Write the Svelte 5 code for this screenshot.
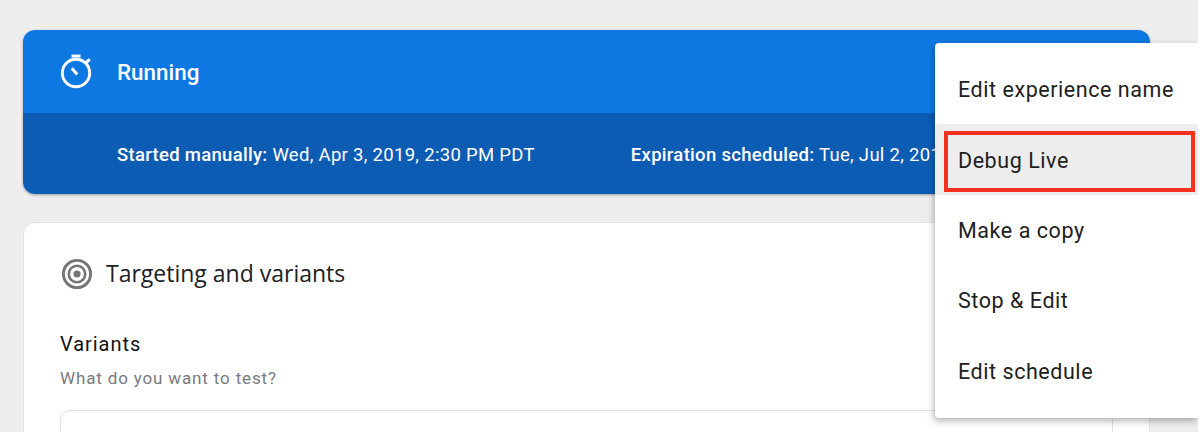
<script>
  const items = ['Edit experience name', 'Debug Live', 'Make a copy', 'Stop & Edit', 'Edit schedule'];
</script>

<div class="page">
  <section class="status">
    <header class="status-head">
      <svg class="timer" width="38" height="38" viewBox="0 0 38 38" aria-hidden="true">
        <circle cx="19" cy="21" r="13.7" fill="none" stroke="#fff" stroke-width="2.9" />
        <rect x="14.5" y="2.6" width="9" height="2.9" fill="#fff" />
        <path d="M29.5 10.5l2.3-2.3" stroke="#fff" stroke-width="3.2" stroke-linecap="round" />
        <path d="M14.8 16.2l5.4 6.2" stroke="#fff" stroke-width="3" />
      </svg>
      <span class="title">Running</span>
    </header>
    <div class="status-meta">
      <p><b>Started manually:</b> Wed, Apr 3, 2019, 2:30 PM PDT</p>
      <p class="exp"><b>Expiration scheduled:</b> Tue, Jul 2, 2019, 2:30 PM PDT</p>
    </div>
  </section>

  <section class="card">
    <div class="card-head">
      <svg width="34" height="34" viewBox="0 0 34 34" aria-hidden="true">
        <circle cx="17" cy="17" r="13.6" fill="none" stroke="#757575" stroke-width="2.9" />
        <circle cx="17" cy="17" r="8.2" fill="none" stroke="#757575" stroke-width="2.6" />
        <circle cx="17" cy="17" r="3.6" fill="#757575" />
      </svg>
      <h2>Targeting and variants</h2>
    </div>
    <h3>Variants</h3>
    <p class="hint">What do you want to test?</p>
    <div class="inner"></div>
  </section>

  <ul class="menu">
    {#each items as item, i}
      <li class:active={i === 1}>{item}</li>
    {/each}
  </ul>
  <div class="callout"></div>
</div>

<style>
  :global(body) {
    margin: 0;
    background: #fff;
  }
  .page {
    position: relative;
    box-sizing: border-box;
    width: 1198px;
    height: 432px;
    overflow: hidden;
    padding: 30px 48px 0 23px;
    background: #eeeeee;
    font-family: Roboto, "Liberation Sans", sans-serif;
  }
  .status {
    height: 164px;
    border-radius: 12px;
    overflow: hidden;
    box-shadow: 0 1px 3px rgba(0, 0, 0, 0.35);
    color: #fff;
    display: flex;
    flex-direction: column;
  }
  .status-head {
    height: 83px;
    flex: none;
    background: #0e78e2;
    display: flex;
    align-items: center;
    padding-left: 34px;
    gap: 22px;
  }
  .timer {
    margin-top: -2px;
  }
  .title {
    font-size: 22.4px;
    font-weight: 500;
    padding-top: 1px;
  }
  .status-meta {
    flex: 1;
    background: #0d5cb4;
    display: flex;
    align-items: center;
    padding: 3px 0 0 94px;
    font-size: 18.5px;
    letter-spacing: 0.3px;
    white-space: nowrap;
  }
  .status-meta p {
    margin: 0;
  }
  .status-meta b {
    font-weight: 500;
  }
  .status-meta .exp {
    margin-left: 96px;
    flex: none;
    width: 306px;
    overflow: hidden;
  }
  .card {
    margin-top: 28px;
    height: 260px;
    background: #fff;
    border: 1px solid #e0e0e6;
    border-radius: 12px;
    padding: 0 36px;
  }
  .card-head {
    display: flex;
    align-items: center;
    gap: 12px;
    height: 100px;
  }
  .card-head svg {
    margin-top: 2px;
  }
  h2 {
    margin: 0;
    font-size: 23px;
    font-weight: 400;
    color: #202124;
    font-family: "Open Sans", Roboto, sans-serif;
  }
  h3 {
    margin: 9px 0 0;
    font-size: 20px;
    font-weight: 400;
    letter-spacing: 0.95px;
    line-height: 24px;
    color: #111;
  }
  .hint {
    margin: 12px 0 0;
    font-size: 17px;
    line-height: 20px;
    letter-spacing: 0.85px;
    color: #777a7e;
  }
  .inner {
    margin-top: 22px;
    height: 60px;
    border: 1px solid #e0e0e6;
    border-radius: 10px;
  }
  .menu {
    position: absolute;
    left: 935px;
    top: 43px;
    width: 263px;
    height: 375px;
    box-sizing: border-box;
    margin: 0;
    padding: 11px 0 0;
    list-style: none;
    background: #fff;
    border-radius: 4px 0 0 4px;
    box-shadow: -1px 3px 7px rgba(0, 0, 0, 0.3);
  }
  .menu li {
    height: 70.4px;
    display: flex;
    align-items: center;
    padding: 1px 0 0 23px;
    box-sizing: border-box;
    font-size: 21.5px;
    letter-spacing: 0.55px;
    color: #212121;
  }
  .menu li.active {
    background: #ededed;
  }
  .callout {
    position: absolute;
    left: 944px;
    top: 131px;
    width: 251px;
    height: 61px;
    box-sizing: border-box;
    border: 4px solid #f5301f;
  }
</style>
